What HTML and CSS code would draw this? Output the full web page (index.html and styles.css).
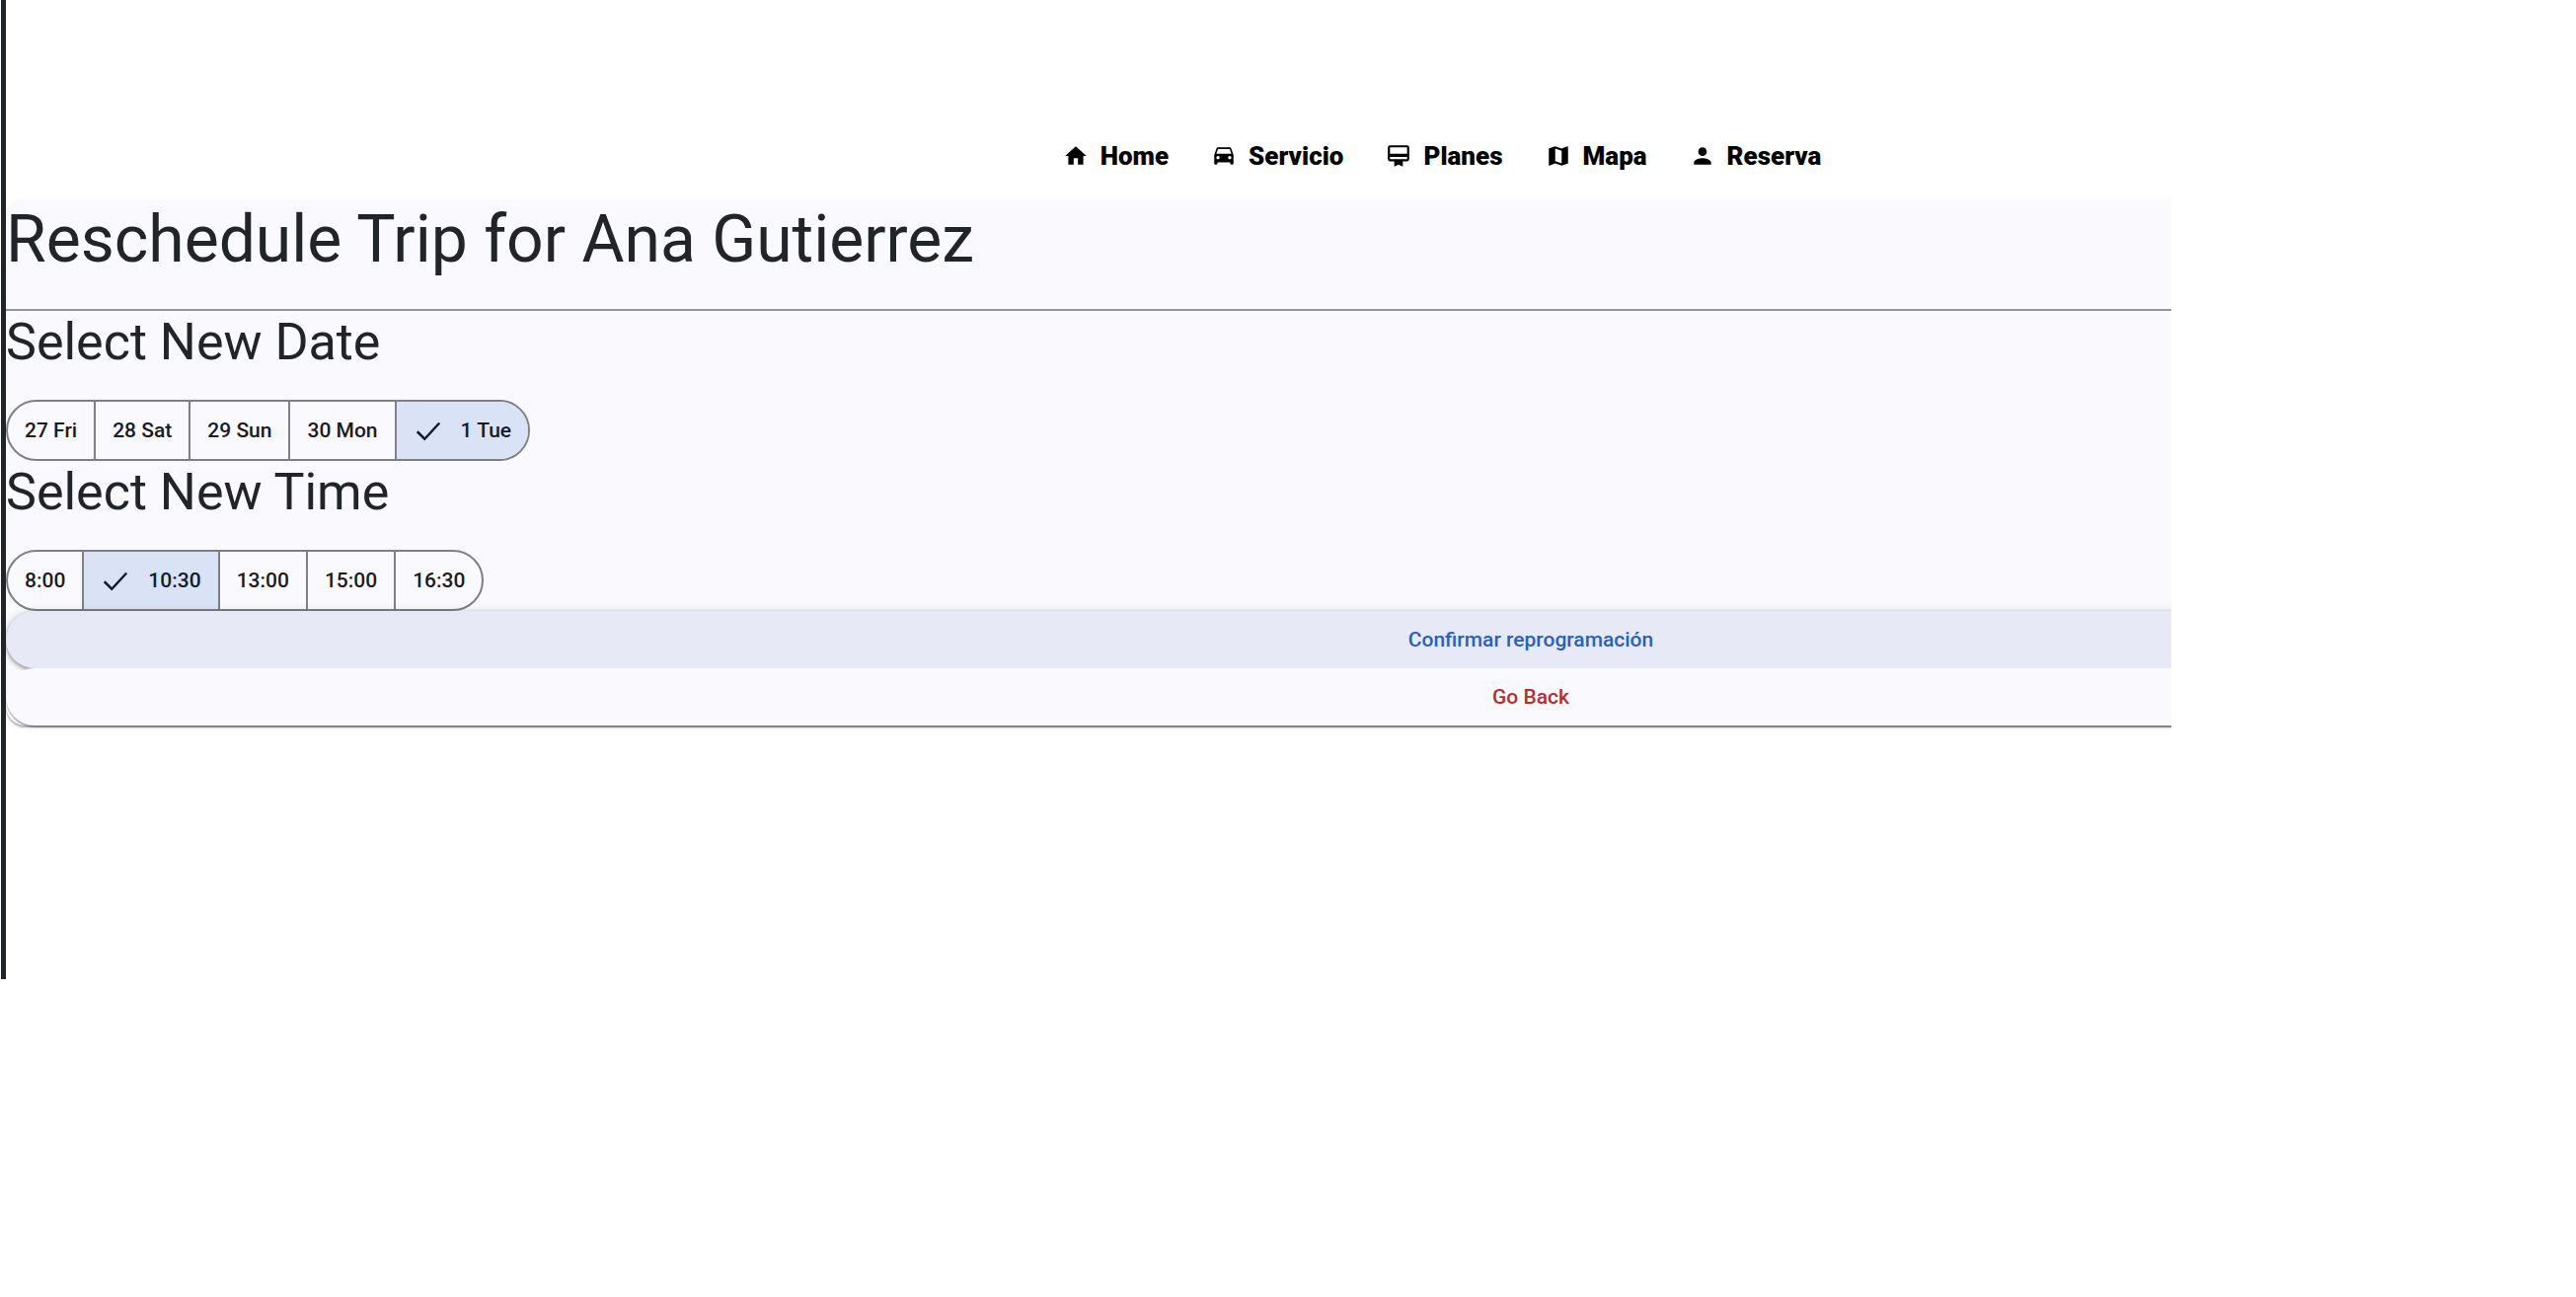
FILE: index.html
```html
<!DOCTYPE html>
<html lang="es">
<head>
<meta charset="utf-8">
<meta name="viewport" content="width=device-width, initial-scale=1">
<title>Reschedule Trip</title>
<link rel="stylesheet" href="styles.css">
</head>
<body>
<div class="frame">
  <nav class="nav">
    <a class="nav-link" href="#home"><svg class="icon" viewBox="0 0 24 24" aria-hidden="true"><path d="M10 20v-6h4v6h5v-8h3L12 3 2 12h3v8z"/></svg>Home</a>
    <a class="nav-link" href="#servicio"><svg class="icon" viewBox="0 0 24 24" aria-hidden="true"><path d="M18.920 5.010C18.720 4.420 18.160 4 17.500 4h-11c-.66 0-1.210.42-1.420 1.010L3 11v8c0 .55.45 1 1 1h1c.55 0 1-.45 1-1v-1h12v1c0 .55.45 1 1 1h1c.55 0 1-.45 1-1v-8l-2.080-5.990zM6.500 15c-.83 0-1.500-.67-1.500-1.500S5.670 12 6.500 12s1.500.67 1.500 1.500S7.330 15 6.500 15zm11 0c-.83 0-1.500-.67-1.500-1.500s.67-1.500 1.500-1.500 1.500.67 1.500 1.500-.67 1.500-1.500 1.500zM5 10l1.500-4.500h11L19 10H5z"/></svg>Servicio</a>
    <a class="nav-link" href="#planes"><svg class="icon" viewBox="0 0 24 24" aria-hidden="true"><path d="M20 2H4c-1.110 0-2 .89-2 2v11c0 1.110.89 2 2 2h4v5l4-2 4 2v-5h4c1.110 0 2-.89 2-2V4c0-1.110-.89-2-2-2zm0 13H4v-2h16v2zm0-5H4V4h16v6z"/></svg>Planes</a>
    <a class="nav-link" href="#mapa"><svg class="icon" viewBox="0 0 24 24" aria-hidden="true"><path d="M20.500 3l-.16.03L15 5.100 9 3 3.360 4.900c-.21.07-.36.25-.36.48V20.500c0 .28.22.5.5.5l.16-.03L9 18.900l6 2.100 5.640-1.900c.21-.07.36-.25.36-.48V3.500c0-.28-.22-.5-.5-.5zM15 19l-6-2.110V5l6 2.110V19z"/></svg>Mapa</a>
    <a class="nav-link" href="#reserva"><svg class="icon" viewBox="0 0 24 24" aria-hidden="true"><path d="M12 12c2.210 0 4-1.790 4-4s-1.790-4-4-4-4 1.790-4 4 1.790 4 4 4zm0 2c-2.670 0-8 1.340-8 4v2h16v-2c0-2.660-5.330-4-8-4z"/></svg>Reserva</a>
  </nav>
  <main class="card">
    <h1 class="title">Reschedule Trip for Ana Gutierrez</h1>
    <h2 class="heading" id="date-heading">Select New Date</h2>
    <div class="segments" role="radiogroup" aria-labelledby="date-heading">
      <label class="segment"><input type="radio" name="date">27 Fri</label>
      <label class="segment"><input type="radio" name="date">28 Sat</label>
      <label class="segment"><input type="radio" name="date">29 Sun</label>
      <label class="segment"><input type="radio" name="date">30 Mon</label>
      <label class="segment"><input type="radio" name="date" checked><svg class="check" viewBox="0 0 24 24" aria-hidden="true"><path d="M3 13l6 6L21 6"/></svg>1 Tue</label>
    </div>
    <h2 class="heading" id="time-heading">Select New Time</h2>
    <div class="segments" role="radiogroup" aria-labelledby="time-heading">
      <label class="segment"><input type="radio" name="time">8:00</label>
      <label class="segment"><input type="radio" name="time" checked><svg class="check" viewBox="0 0 24 24" aria-hidden="true"><path d="M3 13l6 6L21 6"/></svg>10:30</label>
      <label class="segment"><input type="radio" name="time">13:00</label>
      <label class="segment"><input type="radio" name="time">15:00</label>
      <label class="segment"><input type="radio" name="time">16:30</label>
    </div>
    <button class="action action-confirm" type="button">Confirmar reprogramación</button>
    <button class="action action-back" type="button">Go Back</button>
  </main>
</div>
</body>
</html>
```
FILE: styles.css
```css
* {
  box-sizing: border-box;
}

body {
  margin: 0;
  padding: 0 410px 0 1px;
  background: #fff;
  color: #212529;
  font-family: Roboto, "Liberation Sans", sans-serif;
}

.frame {
  min-height: calc(100vh - 322px);
  border-left: 5px solid #212529;
  overflow: hidden;
}

.nav {
  display: flex;
  justify-content: center;
  gap: 43px;
  width: calc(100% + 716px);
  padding: 142px 0 30px;
}

.nav-link {
  display: flex;
  align-items: center;
  gap: 12px;
  color: #000;
  font-size: 26px;
  font-weight: 900;
  line-height: 32px;
  text-decoration: none;
}

.icon {
  width: 26px;
  height: 26px;
  fill: currentColor;
}

.card {
  display: flex;
  flex-direction: column;
  width: calc(100% + 896px);
  border-radius: 20px;
  background: #faf9fd;
  box-shadow: 0 2px 2px rgba(0, 0, 0, 0.3), 0 0 10px rgba(0, 0, 0, 0.06);
}

.title {
  margin: 0;
  padding-bottom: 31px;
  border-bottom: 2px solid #94959b;
  font-size: 66px;
  font-weight: 400;
  line-height: 78px;
}

.heading {
  margin: 0;
  padding-bottom: 26px;
  font-size: 52px;
  font-weight: 400;
  line-height: 64px;
}

.segments {
  display: flex;
  align-self: flex-start;
  height: 62px;
  border: 2px solid #7d8087;
  border-radius: 31px;
  overflow: hidden;
}

.segment {
  display: flex;
  align-items: center;
  padding: 0 17px;
  color: #1a1b1f;
  font-size: 21px;
  font-weight: 500;
  cursor: pointer;
}

.segment + .segment {
  border-left: 2px solid #7d8087;
}

.segment:has(input:checked) {
  background: #dae2f6;
  color: #131c2b;
}

.segment input {
  appearance: none;
  width: 0;
  height: 0;
  margin: 0;
}

.check {
  width: 30px;
  height: 30px;
  margin-right: 18px;
  fill: none;
  stroke: currentColor;
  stroke-width: 2;
}

.action {
  height: 58px;
  border: 0;
  border-radius: 29px;
  font-family: inherit;
  font-size: 21px;
  font-weight: 500;
  cursor: pointer;
  box-shadow: 0 2px 4px rgba(0, 0, 0, 0.4), 0 0 10px rgba(0, 0, 0, 0.1);
}

.action-confirm {
  background: #e7eaf6;
  color: #2a5fbd;
}

.action-back {
  position: relative;
  background: #faf9fd;
  color: #b3302c;
  box-shadow: 0 2px 1px rgba(0, 0, 0, 0.3);
}
```
